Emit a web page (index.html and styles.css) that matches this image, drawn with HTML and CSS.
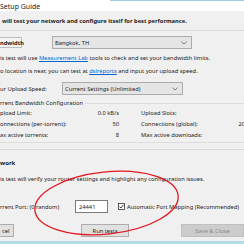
FILE: index.html
```html
<!DOCTYPE html>
<html>
<head>
<meta charset="utf-8">
<link rel="stylesheet" href="styles.css">
</head>
<body>
<div class="win">
  <div class="titlebar"><span>Setup Guide</span></div>
  <p class="intro">will test your network and configure itself for best performance.</p>
  <section class="panel bw">
    <div class="bw-head">
      <span class="tab">ndwidth</span>
      <div class="select wide"><span>Bangkok, TH</span><svg class="caret" viewBox="0 0 8 5" width="6" height="4"><path d="M0.5 0.5 L4 4 L7.5 0.5" fill="none" stroke="#555" stroke-width="1"/></svg></div>
    </div>
    <p class="line l1">is test will use <a>Measurement Lab</a> tools to check and set your bandwidth limits.</p>
    <p class="line l2">o location is near, you can test at <a>dslreports</a> and input your upload speed.</p>
    <div class="upload">
      <span class="lbl">ur Upload Speed:</span>
      <div class="select mid"><span>Current Settings (Unlimited)</span><svg class="caret" viewBox="0 0 8 5" width="6" height="4"><path d="M0.5 0.5 L4 4 L7.5 0.5" fill="none" stroke="#555" stroke-width="1"/></svg></div>
    </div>
    <fieldset class="group">
      <legend>rrent Bandwidth Configuration</legend>
      <div class="stats">
        <div class="stat c1"><span>pload Limit:</span><span>0.0 kB/s</span></div>
        <div class="stat c2"><span>Upload Slots:</span><span></span></div>
        <div class="stat c1"><span>onnections (per-torrent):</span><span>50</span></div>
        <div class="stat c2"><span>Connections (global):</span><span>20</span></div>
        <div class="stat c1"><span>ax active torrents:</span><span>8</span></div>
        <div class="stat c2"><span>Max active downloads:</span><span></span></div>
      </div>
    </fieldset>
  </section>
  <section class="net">
    <h3 class="net-title">work</h3>
    <p class="line desc">is test will verify your router settings and highlight any configuration issues.</p>
    <div class="port">
      <span class="lbl">rrent Port: (0 random)</span>
      <span class="input">24441</span>
      <span class="check"><svg viewBox="0 0 7 7" width="7" height="7"><rect x="0.5" y="0.5" width="6" height="6" fill="#fff" stroke="#333" stroke-width="0.8"/><path d="M1.5 3.6 L2.9 5 L5.6 1.8" fill="none" stroke="#222" stroke-width="0.9"/></svg></span>
      <span class="chk-lbl">Automatic Port Mapping (Recommended)</span>
    </div>
  </section>
  <div class="buttons">
    <span class="btn cancel">cel</span>
    <span class="btn run">Run tests</span>
    <span class="btn save">Save &amp; Close</span>
  </div>
  <div class="taskbar"></div>
  <svg class="mark" viewBox="0 0 244 244" width="244" height="244"><ellipse cx="106.5" cy="203" rx="72" ry="31" transform="rotate(-6 106.5 203)" fill="none" stroke="#e3161e" stroke-width="1.3"/></svg>
</div>
</body>
</html>
```
FILE: styles.css
```css
html, body {
  margin: 0;
  padding: 0;
}
body {
  width: 244px;
  height: 244px;
  overflow: hidden;
  background: #f0f0f0;
  font-family: "Noto Sans", "Open Sans", sans-serif;
  font-size: 5.75px;
  color: #1b1b1b;
}
.win {
  position: relative;
  width: 244px;
  height: 244px;
  overflow: hidden;
  display: flex;
  flex-direction: column;
}
.titlebar {
  height: 10px;
  background: #fff;
  border-top: 1px solid;
  border-image: linear-gradient(to right, #fff 0, #fff 45%, #9fc9e4 45%, #9fc9e4 100%) 1;
  display: flex;
  align-items: center;
  font-size: 7px;
  color: #222;
}
.intro {
  margin: 0;
  height: 19px;
  display: flex;
  align-items: center;
  padding-left: 2px;
  font-weight: bold;
  white-space: nowrap;
}
.panel {
  border-top: 1px solid #dadada;
  border-bottom: 1px solid #dadada;
  width: 260px;
}
.bw-head {
  display: flex;
  align-items: center;
  height: 13px;
  margin-top: 5px;
}
.tab {
  box-sizing: border-box;
  width: 22px;
  height: 11px;
  border: 1px solid #bdbdbd;
  border-left: 0;
  background: #f3f3f3;
  font-weight: bold;
  display: flex;
  align-items: center;
}
.select {
  box-sizing: border-box;
  height: 13px;
  background: #e5e5e5;
  border: 1px solid #acacac;
  display: flex;
  align-items: center;
  justify-content: space-between;
  padding: 0 4px 0 2px;
  white-space: nowrap;
}
.select.wide {
  width: 140px;
  margin-left: 30px;
}
.select.mid {
  width: 121px;
  margin-left: 17px;
}
.line {
  margin: 0;
  line-height: 7px;
  white-space: nowrap;
}
.l1 { margin-top: 6px; }
.l2 { margin-top: 6px; }
a {
  color: #0066cc;
  text-decoration: underline;
}
.upload {
  display: flex;
  align-items: center;
  height: 13px;
  margin-top: 7px;
  white-space: nowrap;
}
.upload .lbl {
  width: 45px;
}
.group {
  margin: 5px 0 6px 0;
  padding: 0 0 2px 0;
  border: 1px solid #dcdcdc;
  border-left: 0;
  min-width: 0;
}
.group legend {
  padding: 0 2px 0 0;
  line-height: 7px;
}
.stats {
  display: grid;
  grid-template-columns: 119px 104px;
  column-gap: 22px;
  grid-auto-rows: 11px;
  align-items: center;
}
.stat {
  display: flex;
  justify-content: space-between;
  white-space: nowrap;
}
.net-title {
  margin: 10px 0 0 0;
  font-size: 6px;
  font-weight: bold;
  line-height: 7px;
}
.desc { margin-top: 9px; }
.port {
  display: flex;
  align-items: center;
  height: 13px;
  margin-top: 17px;
  white-space: nowrap;
}
.port .lbl { width: 75px; }
.input {
  box-sizing: border-box;
  width: 33px;
  height: 13px;
  background: #fff;
  border: 1px solid #7a7a7a;
  display: flex;
  align-items: center;
  padding-left: 3px;
}
.check {
  margin-left: 10px;
  display: flex;
}
.chk-lbl { margin-left: 2px; }
.buttons {
  display: flex;
  margin-top: 11px;
  height: 13px;
  white-space: nowrap;
}
.btn {
  box-sizing: border-box;
  height: 13px;
  background: #e1e1e1;
  border: 1px solid #adadad;
  display: flex;
  align-items: center;
  justify-content: center;
}
.btn.cancel {
  width: 18px;
  border-left: 0;
  justify-content: flex-start;
  padding-left: 2px;
}
.btn.run {
  width: 63px;
  margin-left: 67px;
}
.btn.save {
  width: 63px;
  margin-left: 52px;
  flex-shrink: 0;
  background: #cccccc;
  border-color: #bfbfbf;
  color: #8a8a8a;
}
.taskbar {
  margin-top: auto;
  height: 3px;
  background: #b4dbe6;
}
.mark {
  position: absolute;
  left: 0;
  top: 0;
  pointer-events: none;
}
```
